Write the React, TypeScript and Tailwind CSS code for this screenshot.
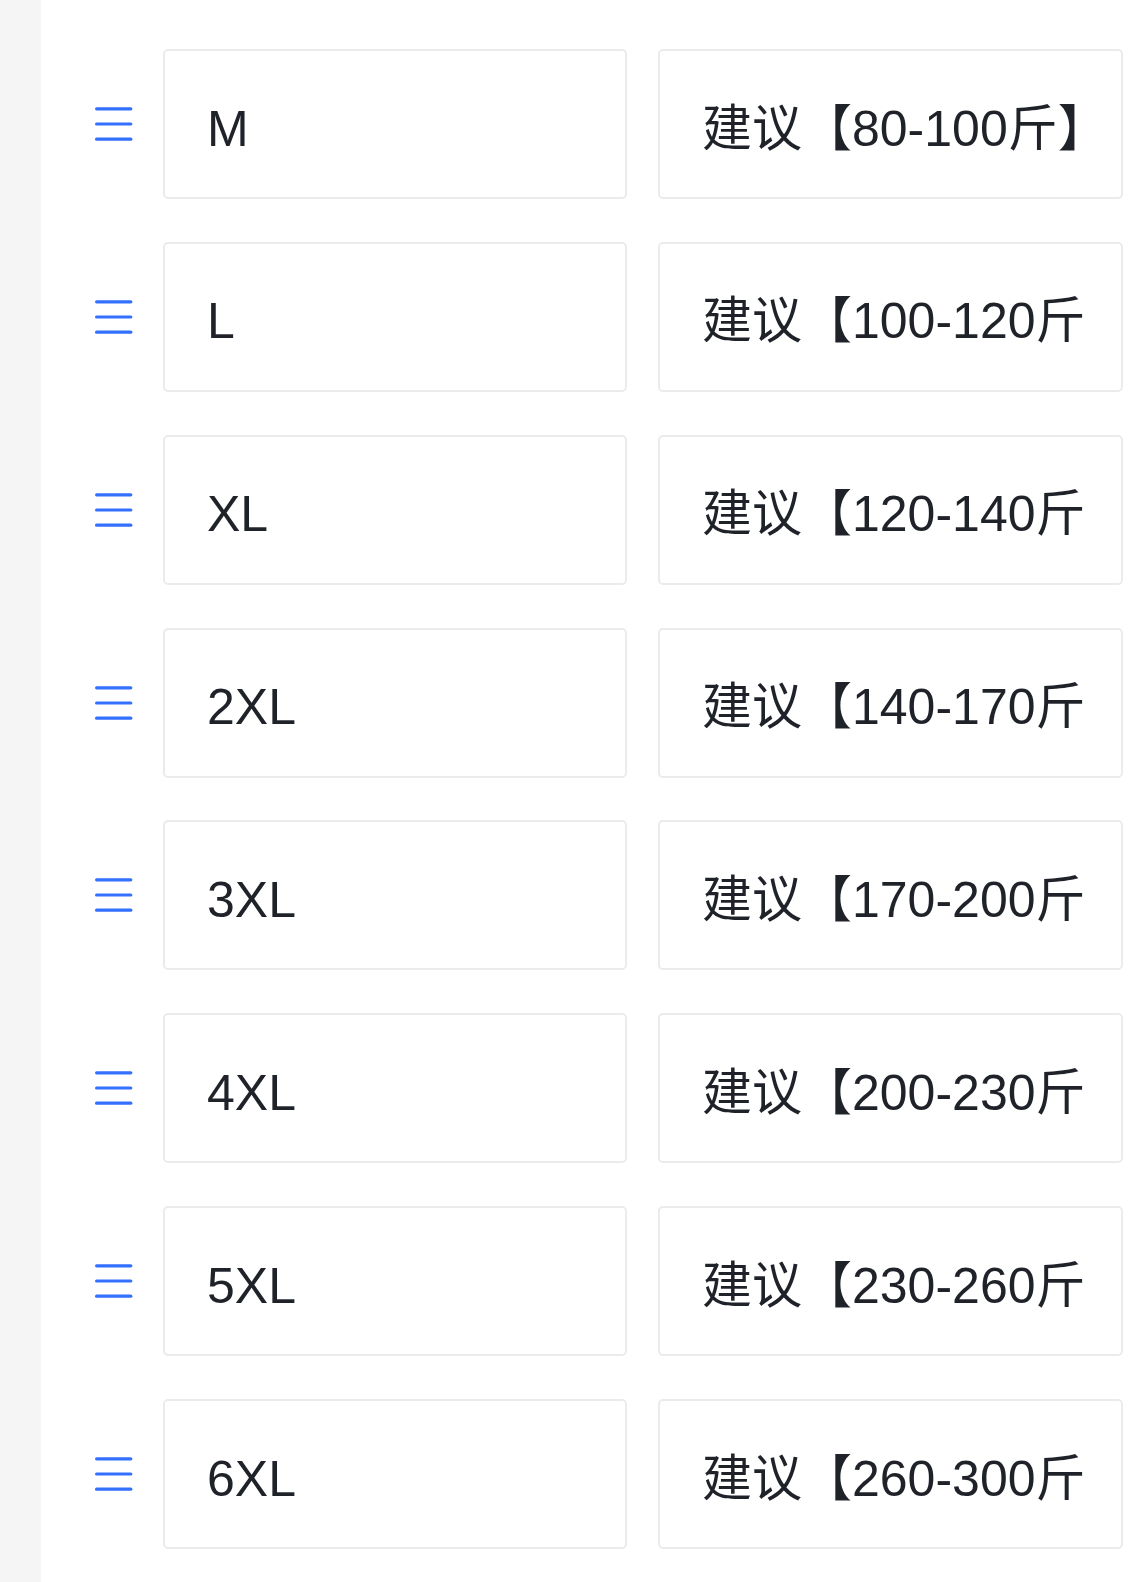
import React from 'react';

const sizes = [
  { size: 'M', tip: '建议【80-100斤】' },
  { size: 'L', tip: '建议【100-120斤】' },
  { size: 'XL', tip: '建议【120-140斤】' },
  { size: '2XL', tip: '建议【140-170斤】' },
  { size: '3XL', tip: '建议【170-200斤】' },
  { size: '4XL', tip: '建议【200-230斤】' },
  { size: '5XL', tip: '建议【230-260斤】' },
  { size: '6XL', tip: '建议【260-300斤】' },
];

function DragHandle() {
  return (
    <svg width="38" height="34" viewBox="0 0 38 34" fill="none" className="shrink-0">
      <g stroke="#3370ff" strokeWidth="3.2" strokeLinecap="round">
        <line x1="1.6" y1="1.8" x2="35.8" y2="1.8" />
        <line x1="1.6" y1="17" x2="35.8" y2="17" />
        <line x1="1.6" y1="32.2" x2="35.8" y2="32.2" />
      </g>
    </svg>
  );
}

function Field({ value, className = '' }: { value: string; className?: string }) {
  return (
    <div
      className={`flex h-[150px] items-center rounded-[5px] border-2 border-[#ebebeb] bg-white pt-[9px] pl-[42px] pr-[37px] text-[50px] text-[#1f2329] ${className}`}
    >
      <span className="block min-w-0 overflow-hidden whitespace-nowrap leading-[70px]">{value}</span>
    </div>
  );
}

export default function App() {
  return (
    <div className="flex min-h-[1582px] w-full bg-white font-['Liberation_Sans','Noto_Sans_CJK_SC',sans-serif]">
      {/* left gutter */}
      <div className="w-[41px] shrink-0 bg-[#f5f5f6]" />

      <div className="flex min-w-0 flex-1 flex-col gap-[42.86px] pt-[49px] pl-[54px] pr-[12px]">
        {sizes.map((row) => (
          <div key={row.size} className="flex items-center">
            <DragHandle />
            <Field value={row.size} className="ml-[30px] w-[464px] shrink-0" />
            <Field value={row.tip} className="ml-[31px] min-w-0 flex-1" />
          </div>
        ))}
      </div>
    </div>
  );
}
